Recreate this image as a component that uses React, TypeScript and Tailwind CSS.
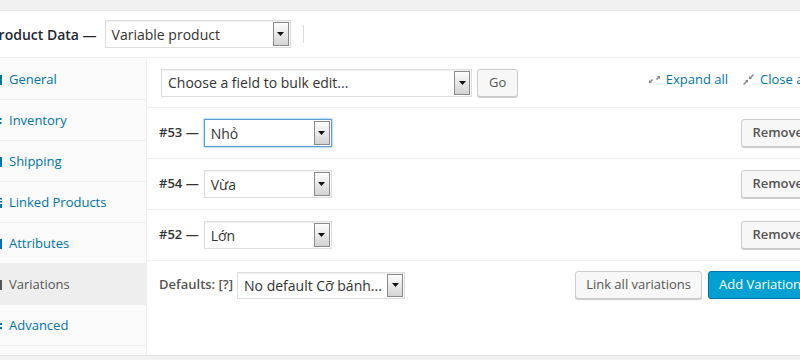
import React from "react";

const font = { fontFamily: "'Open Sans', 'Liberation Sans', sans-serif" };

function Arrow() {
  return (
    <span className="flex h-full w-[16px] shrink-0 items-center justify-center border border-[#8a8a8a] bg-gradient-to-b from-[#fdfdfd] to-[#d4d4d4]">
      <svg width="7" height="4" viewBox="0 0 7 4">
        <path d="M0 0h7L3.5 4z" fill="#111" />
      </svg>
    </span>
  );
}

function Select({
  text,
  w,
  h = "h-[28px]",
  focus = false,
  size = "text-[14px]",
}: {
  text: string;
  w: string;
  h?: string;
  focus?: boolean;
  size?: string;
}) {
  return (
    <div
      className={`flex ${w} ${h} items-stretch bg-white ${
        focus ? "border border-[#5b9dd9] shadow-[0_0_2px_rgba(30,140,190,0.8)]" : "border border-[#ddd] shadow-[inset_0_1px_2px_rgba(0,0,0,0.07)]"
      }`}
    >
      <span className={`flex flex-1 items-center overflow-hidden whitespace-nowrap pl-[6px] ${size} text-[#333]`}>{text}</span>
      <span className="flex items-stretch py-px pr-px">
        <Arrow />
      </span>
    </div>
  );
}

function SideIcon({ kind }: { kind: number }) {
  const c = kind === 5 ? "#555" : "#0073aa";
  return (
    <svg width="15" height="12" viewBox="0 0 15 12" className="shrink-0">
      {kind === 1 ? (
        <g fill={c}>
          <rect x="12" y="3" width="1.5" height="2" />
          <rect x="12" y="7" width="1.5" height="2" />
        </g>
      ) : kind === 3 ? (
        <g fill={c}>
          <rect x="12" y="1" width="2" height="1.5" />
          <rect x="11" y="4" width="3" height="1.5" />
          <rect x="12" y="7" width="2" height="4" />
        </g>
      ) : kind === 6 ? (
        <g fill={c}>
          <rect x="11" y="3" width="3" height="2" />
          <rect x="11" y="7" width="3" height="2" />
        </g>
      ) : (
        <rect x="12" y="1" width="2" height="10" fill={c} />
      )}
    </svg>
  );
}

function Btn({ children, className = "" }: { children: React.ReactNode; className?: string }) {
  return (
    <div
      className={`flex h-[28px] items-center whitespace-nowrap rounded-[3px] border border-[#ccc] bg-[#f7f7f7] px-[10px] text-[13px] text-[#555] shadow-[0_1px_0_#ccc] ${className}`}
    >
      {children}
    </div>
  );
}

function ExpandIcon({ close = false }: { close?: boolean }) {
  return (
    <svg width="11" height="11" viewBox="0 0 11 11" className="mr-[6px]">
      {close ? (
        <g fill="#888">
          <path d="M0 10l3-3-1-1h3v3l-1-1-3 3z" />
          <path d="M11 1l-3 3 1 1H6V2l1 1 3-3z" />
        </g>
      ) : (
        <g fill="#888">
          <path d="M4 6l-2 2 1 1H0V6l1 1 2-2z" />
          <path d="M7 5l2-2-1-1h3v3l-1-1-2 2z" />
        </g>
      )}
    </svg>
  );
}

function VarRow({ id, value, focus = false }: { id: string; value: string; focus?: boolean }) {
  return (
    <div className="flex h-[51px] items-center border-b border-[#eee] pl-[12px] pr-[8px]">
      <span className="mr-[5px] text-[13px] font-semibold text-[#333]">{id} —</span>
      <Select text={value} w="w-[128px]" focus={focus} size="text-[14px]" />
      <div className="flex-1" />
      <Btn className="font-semibold">Remove</Btn>
    </div>
  );
}

export default function App() {
  const items = ["General", "Inventory", "Shipping", "Linked Products", "Attributes", "Variations", "Advanced"];
  return (
    <div className="h-[360px] w-[800px] overflow-hidden bg-[#f1f1f1] pt-[10px]" style={font}>
      <div className="ml-[-12px] flex h-[346px] w-[834px] flex-col border-y border-[#e5e5e5] bg-white">
        <div className="flex h-[47px] shrink-0 items-center border-b border-[#eee]">
          <span className="ml-[2px] text-[14px] font-semibold text-[#23282d]">Product Data —</span>
          <div className="ml-[8px]">
            <Select text="Variable product" w="w-[186px]" h="h-[28px]" size="text-[14px]" />
          </div>
          <div className="ml-[12px] h-[18px] w-px bg-[#ddd]" />
        </div>
        <div className="flex flex-1">
          <div className="w-[159px] shrink-0 border-r border-[#eee] bg-[#fafafa] pt-[1px]">
            {items.map((t, i) => (
              <div
                key={t}
                className={`flex h-[41px] items-center border-b border-[#eee] pt-[2px] ${i === 5 ? "bg-[#eee] text-[#555]" : "text-[#0073aa]"}`}
              >
                <SideIcon kind={i} />
                <span className="ml-[6px] text-[13px]">{t}</span>
              </div>
            ))}
          </div>
          <div className="flex flex-1 flex-col">
            <div className="flex h-[50px] items-center border-b border-[#eee] pl-[14px] pr-[12px]">
              <Select text="Choose a field to bulk edit..." w="w-[311px]" size="text-[14px]" />
              <Btn className="ml-[5px] px-[11px]">Go</Btn>
              <div className="flex-1" />
              <span className="mt-[-6px] flex items-center whitespace-nowrap text-[13px] text-[#0073aa]">
                <ExpandIcon />
                Expand all
              </span>
              <span className="ml-[15px] mt-[-6px] flex items-center whitespace-nowrap text-[13px] text-[#0073aa]">
                <ExpandIcon close />
                Close all
              </span>
            </div>
            <VarRow id="#53" value="Nhỏ" focus />
            <VarRow id="#54" value="Vừa" />
            <VarRow id="#52" value="Lớn" />
            <div className="flex h-[48px] items-center pl-[12px] pr-[10px]">
              <span className="mr-[4px] text-[13px] font-semibold text-[#555]">Defaults: [?]</span>
              <Select text="No default Cỡ bánh..." w="w-[168px]" h="h-[27px]" size="text-[14px]" />
              <div className="flex-1" />
              <Btn className="px-[10px]">Link all variations</Btn>
              <div className="ml-[6px] flex h-[28px] items-center whitespace-nowrap rounded-[3px] border border-[#0073aa] bg-[#00a0d2] px-[10px] text-[13px] text-white">
                Add Variation
              </div>
            </div>
          </div>
        </div>
      </div>
    </div>
  );
}
